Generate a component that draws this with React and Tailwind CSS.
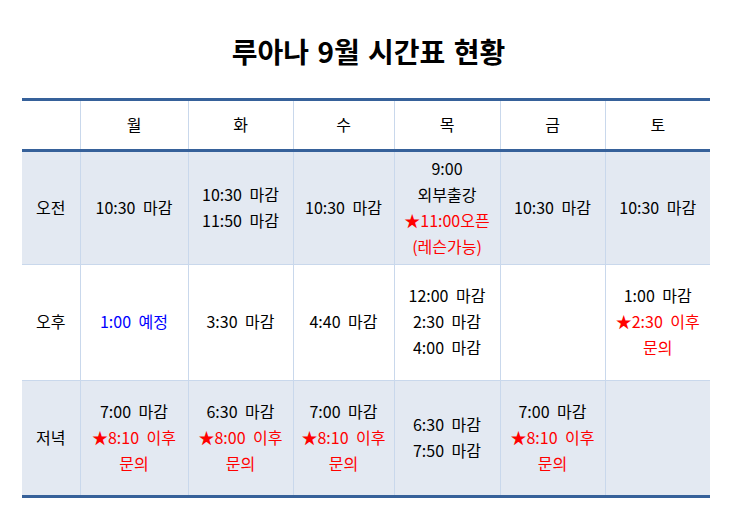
import React from "react";

const days = ["월", "화", "수", "목", "금", "토"];

const rows = [
  {
    label: "오전",
    shaded: true,
    cells: [
      [{ t: "10:30 마감" }],
      [{ t: "10:30 마감" }, { t: "11:50 마감" }],
      [{ t: "10:30 마감" }],
      [{ t: "9:00" }, { t: "외부출강" }, { t: "★11:00오픈", c: "red" }, { t: "(레슨가능)", c: "red" }],
      [{ t: "10:30 마감" }],
      [{ t: "10:30 마감" }],
    ],
  },
  {
    label: "오후",
    shaded: false,
    cells: [
      [{ t: "1:00 예정", c: "blue" }],
      [{ t: "3:30 마감" }],
      [{ t: "4:40 마감" }],
      [{ t: "12:00 마감" }, { t: "2:30 마감" }, { t: "4:00 마감" }],
      [],
      [{ t: "1:00 마감" }, { t: "★2:30 이후", c: "red" }, { t: "문의", c: "red" }],
    ],
  },
  {
    label: "저녁",
    shaded: true,
    cells: [
      [{ t: "7:00 마감" }, { t: "★8:10 이후", c: "red" }, { t: "문의", c: "red" }],
      [{ t: "6:30 마감" }, { t: "★8:00 이후", c: "red" }, { t: "문의", c: "red" }],
      [{ t: "7:00 마감" }, { t: "★8:10 이후", c: "red" }, { t: "문의", c: "red" }],
      [{ t: "6:30 마감" }, { t: "7:50 마감" }],
      [{ t: "7:00 마감" }, { t: "★8:10 이후", c: "red" }, { t: "문의", c: "red" }],
      [],
    ],
  },
];

const colorClass = {
  red: "text-[#ff0000]",
  blue: "text-[#0000ff]",
};

const Line = ({ item }) => (
  <div className={item.c ? colorClass[item.c] : "text-black"}>{item.t}</div>
);

export default function App() {
  return (
    <div
      className="w-[737px] h-[531px] bg-white"
      style={{ fontFamily: '"Noto Sans CJK KR", "Noto Sans", sans-serif' }}
    >
      {/* Title */}
      <h1 className="pt-[32px] h-[71px] text-center text-[28px] leading-[38px] font-bold text-black [word-spacing:2px]">
        루아나 9월 시간표 현황
      </h1>

      {/* Timetable */}
      <div className="mt-[27px] ml-[22px] w-[688px]">
        <table className="w-full table-fixed border-collapse text-[16px] leading-[26px] text-center [word-spacing:4px]">
          <colgroup>
            <col className="w-[58px]" />
            <col className="w-[108px]" />
            <col className="w-[105px]" />
            <col className="w-[101px]" />
            <col className="w-[106px]" />
            <col className="w-[105px]" />
            <col className="w-[105px]" />
          </colgroup>
          <thead>
            <tr className="h-[51px] border-t-[3px] border-b-[3px] border-[#36619a]">
              <th className="font-normal pb-[2px]"></th>
              {days.map((d) => (
                <th key={d} className="font-normal pb-[2px] border-l border-[#c9d8ec]">
                  {d}
                </th>
              ))}
            </tr>
          </thead>
          <tbody>
            {rows.map((row, i) => (
              <tr
                key={row.label}
                className={`${i === 0 ? "h-[114px]" : "h-[116px]"} ${
                  row.shaded ? "bg-[#e3e9f2]" : "bg-white"
                } ${i === rows.length - 1 ? "border-b-[3px] border-[#36619a]" : "border-b border-[#c9d8ec]"}`}
              >
                <td className="align-middle pb-[3px]">{row.label}</td>
                {row.cells.map((lines, j) => (
                  <td key={j} className="align-middle pb-[3px] border-l border-[#c9d8ec]">
                    {lines.map((item, k) => (
                      <Line key={k} item={item} />
                    ))}
                  </td>
                ))}
              </tr>
            ))}
          </tbody>
        </table>
      </div>
    </div>
  );
}
